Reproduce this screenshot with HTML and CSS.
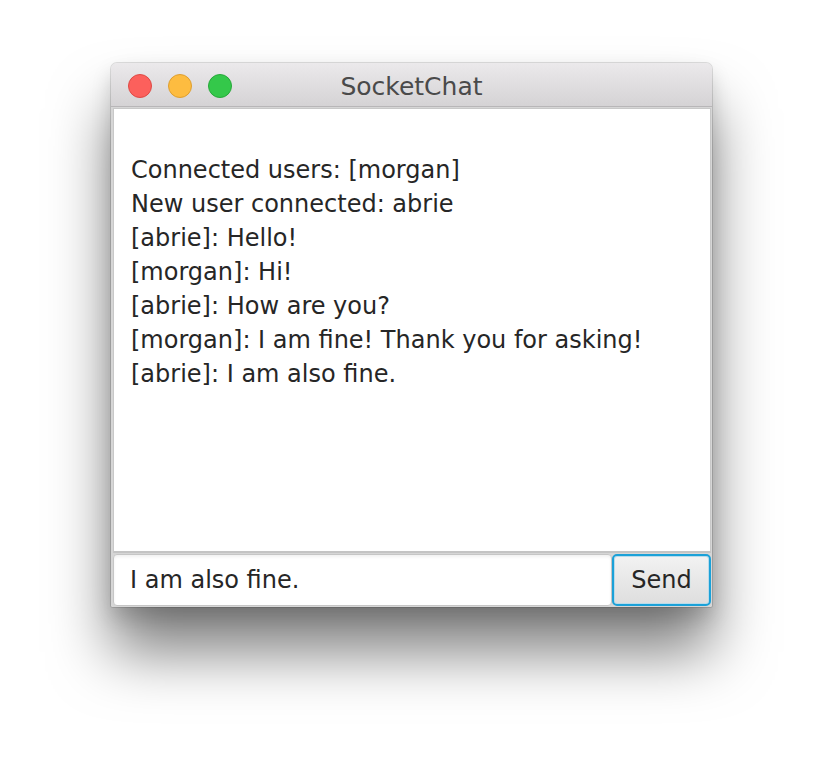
FILE: index.html
```
<!DOCTYPE html>
<html>
<head>
<meta charset="utf-8">
<link rel="stylesheet" href="styles.css">
</head>
<body>
<div class="window">
  <div class="titlebar">
    <div class="lights">
      <span class="light red"></span>
      <span class="light yellow"></span>
      <span class="light green"></span>
    </div>
    <div class="title">SocketChat</div>
  </div>
  <div class="content">
    <div class="log">
      <div class="line">Connected users: [morgan]</div>
      <div class="line">New user connected: abrie</div>
      <div class="line">[abrie]: Hello!</div>
      <div class="line">[morgan]: Hi!</div>
      <div class="line">[abrie]: How are you?</div>
      <div class="line">[morgan]: I am fine! Thank you for asking!</div>
      <div class="line">[abrie]: I am also fine.</div>
    </div>
    <div class="inputrow">
      <div class="input">I am also fine.</div>
      <div class="send">Send</div>
    </div>
  </div>
</div>
</body>
</html>
```
FILE: styles.css
```
html, body {
  margin: 0;
  padding: 0;
  background: #ffffff;
}
body {
  width: 824px;
  height: 768px;
  overflow: hidden;
  font-family: "DejaVu Sans", "Liberation Sans", sans-serif;
}
.window {
  margin: 63px 0 0 111px;
  width: 601px;
  height: 544px;
  border-radius: 6px 6px 2px 2px;
  background: #ececec;
  box-shadow: 0 0 0 1px rgba(0,0,0,0.12), 0 45px 60px rgba(0,0,0,0.5), 0 10px 20px rgba(0,0,0,0.15);
  display: flex;
  flex-direction: column;
  overflow: hidden;
}
.titlebar {
  height: 43px;
  flex: none;
  background: linear-gradient(#ebe9eb, #d5d3d5);
  border-bottom: 1px solid #b8b6b8;
  display: flex;
  align-items: center;
  position: relative;
}
.lights {
  display: flex;
  gap: 16px;
  padding-left: 17px;
  padding-top: 2px;
}
.light {
  width: 24px;
  height: 24px;
  border-radius: 50%;
  box-sizing: border-box;
}
.red { background: #fc605c; border: 1px solid #de4a45; }
.yellow { background: #fdbc40; border: 1px solid #de9f30; }
.green { background: #34c84a; border: 1px solid #27a83a; }
.title {
  position: absolute;
  left: 0;
  right: 0;
  top: 0;
  bottom: 0;
  display: flex;
  align-items: center;
  justify-content: center;
  font-size: 25px;
  color: #4a4a4a;
  padding-top: 3px;
}
.content {
  flex: 1;
  display: flex;
  flex-direction: column;
  padding: 1px 1px 0 2px;
  background: #d6d6d6;
}
.log {
  flex: 1;
  background: #ffffff;
  border: 1px solid #c8c8c8;
  border-bottom: 2px solid #c4c4c4;
  padding: 44px 0 0 17px;
  font-size: 24px;
  color: #262626;
}
.line {
  line-height: 34px;
  white-space: nowrap;
}
.inputrow {
  display: flex;
  height: 54px;
  padding-top: 1px;
  box-sizing: border-box;
}
.input {
  flex: 1;
  background: #ffffff;
  border: 1px solid #c6c6c6;
  border-radius: 4px;
  margin-bottom: 1px;
  font-size: 24px;
  color: #262626;
  display: flex;
  align-items: center;
  padding-left: 16px;
  box-shadow: inset 0 2px 3px rgba(0,0,0,0.06);
}
.send {
  width: 99px;
  box-sizing: border-box;
  border: 2px solid #1ba1d8;
  border-radius: 5px;
  background: linear-gradient(#f2f2f2, #dedede);
  font-size: 24px;
  color: #262626;
  display: flex;
  align-items: center;
  justify-content: center;
  box-shadow: inset 0 0 0 1px #b9dbea;
  margin-bottom: 1px;
}
```
